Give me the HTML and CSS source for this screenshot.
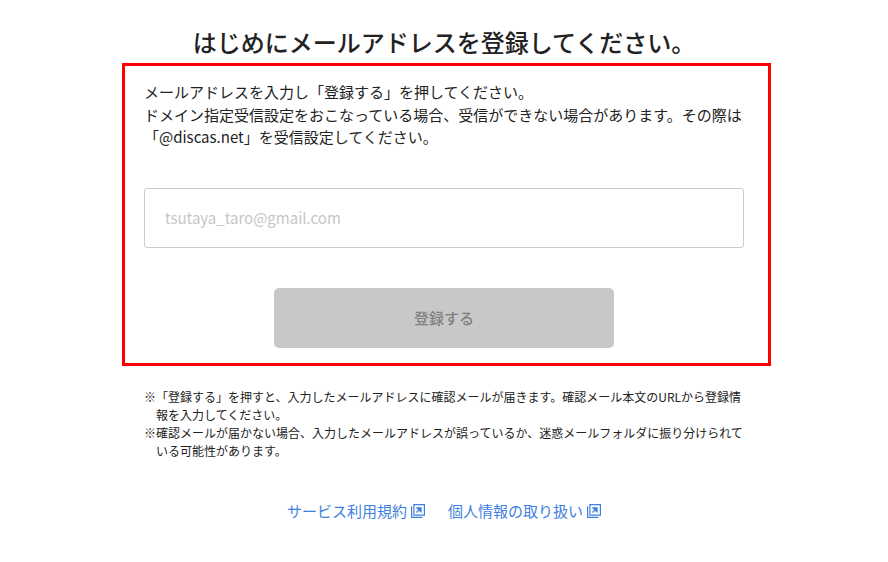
FILE: index.html
```html
<!DOCTYPE html>
<html lang="ja">
<head>
<meta charset="utf-8">
<title>メールアドレス登録</title>
<link rel="stylesheet" href="styles.css">
</head>
<body>
<main class="page">
  <h1 class="title">はじめにメールアドレスを登録してください。</h1>
  <form class="box">
    <p class="lead">メールアドレスを入力し「登録する」を押してください。<br>ドメイン指定受信設定をおこなっている場合、受信ができない場合があります。その際は「@discas.net」を受信設定してください。</p>
    <input class="field" type="text" placeholder="tsutaya_taro@gmail.com">
    <button class="submit" type="button">登録する</button>
  </form>
  <ul class="notes">
    <li>※「登録する」を押すと、入力したメールアドレスに確認メールが届きます。確認メール本文のURLから登録情報を入力してください。</li>
    <li>※確認メールが届かない場合、入力したメールアドレスが誤っているか、迷惑メールフォルダに振り分けられている可能性があります。</li>
  </ul>
  <nav class="links">
    <a class="link" href="#">サービス利用規約<svg class="ext" viewBox="0 0 14 14" width="14" height="14"><path d="M.6 2.5v10.9h10.9" fill="none" stroke="currentColor" stroke-width="1.2"/><path d="M2.9.6h10.5v10.5H2.9z" fill="none" stroke="currentColor" stroke-width="1.2"/><path d="M5.5 8.5l4-4M6 3.8h4v4z" fill="currentColor" stroke="currentColor" stroke-width="1.2"/></svg></a>
    <a class="link" href="#">個人情報の取り扱い<svg class="ext" viewBox="0 0 14 14" width="14" height="14"><path d="M.6 2.5v10.9h10.9" fill="none" stroke="currentColor" stroke-width="1.2"/><path d="M2.9.6h10.5v10.5H2.9z" fill="none" stroke="currentColor" stroke-width="1.2"/><path d="M5.5 8.5l4-4M6 3.8h4v4z" fill="currentColor" stroke="currentColor" stroke-width="1.2"/></svg></a>
  </nav>
</main>
</body>
</html>
```
FILE: styles.css
```css
* { box-sizing: border-box; }
html, body { margin: 0; padding: 0; background: #fff; }
body { font-family: "Noto Sans CJK JP", "Noto Sans", sans-serif; color: #222; }
.page { width: 649px; margin-left: 122px; display: flex; flex-direction: column; }
.title { margin: 24px 0 0; height: 39px; padding-right: 5px; font-size: 24px; line-height: 36px; font-weight: 500; text-align: center; color: #222; }
.box { height: 303px; border: 3px solid #f00; padding: 15px 24px 0 19px; display: flex; flex-direction: column; }
.lead { margin: 0; font-size: 15px; line-height: 22.5px; color: #222; }
.field { margin-top: 39.5px; height: 60px; border: 1px solid #ccc; border-radius: 3px; padding: 0 20px 2px; font: inherit; font-size: 15px; outline: none; }
.field::placeholder { color: #c6c6c6; opacity: 1; }
.submit { margin: 40px auto 0; width: 340px; height: 60px; padding: 0 0 2px; border: 0; border-radius: 5px; background: #c8c8c8; color: #808080; font: inherit; font-size: 15px; font-weight: 500; }
.notes { list-style: none; margin: 22px 0 0; padding: 0 27px 0 22px; font-size: 12px; line-height: 18px; color: #222; }
.notes li { padding-left: 12px; text-indent: -12px; }
.links { display: flex; justify-content: center; gap: 23px; margin-top: 39px; padding-right: 5px; }
.link { display: inline-flex; align-items: center; gap: 4px; color: #3f7fe0; font-size: 15px; line-height: 24px; text-decoration: none; }
.ext { flex: none; }
```
